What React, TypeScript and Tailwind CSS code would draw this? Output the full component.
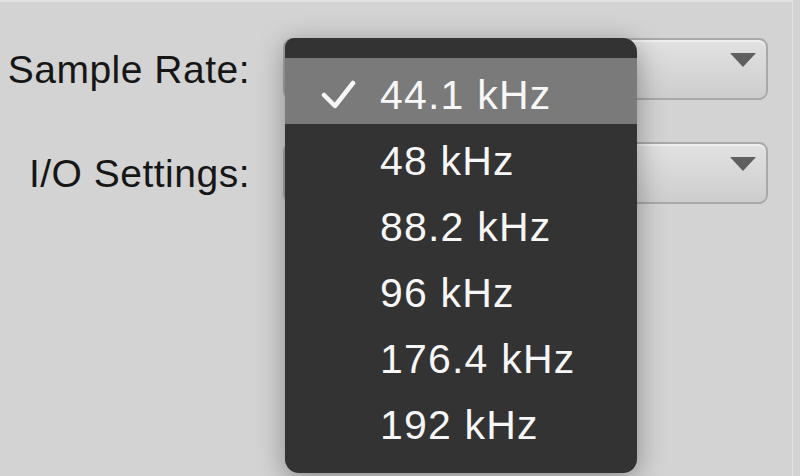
import React from "react";

const rates = ["44.1 kHz", "48 kHz", "88.2 kHz", "96 kHz", "176.4 kHz", "192 kHz"];

function PopupButton() {
  return (
    <div className="h-[62px] w-[485px] rounded-[9px] border-2 border-[#a9a9a9] bg-gradient-to-b from-[#e2e2e2] to-[#cdcdcd] shadow-[inset_0_2px_0_#efefef] flex items-start justify-end pr-[9px] pt-[12px]">
      <svg width="28" height="16" viewBox="0 0 28 16">
        <polygon points="1,1 27,1 14,15" fill="#5f5f5f" />
      </svg>
    </div>
  );
}

export default function App() {
  return (
    <div className="w-[800px] h-[476px] bg-[#d3d3d3] flex overflow-hidden font-['Liberation_Sans',Arial,sans-serif]">
      <div className="relative w-[793px] h-full border-r border-[#e3e3e3] border-t-2 border-t-[#e1e1e1]">
        <div className="pt-[36px] grid grid-cols-[250px_485px] gap-x-[33px] gap-y-[42px] items-center">
          <div className="text-right text-[39px] tracking-[0.5px] text-[#161616] leading-none">Sample Rate:</div>
          <PopupButton />
          <div className="text-right text-[39px] tracking-[0.5px] text-[#161616] leading-none">I/O Settings:</div>
          <PopupButton />
        </div>

        <div className="absolute left-[285px] top-[36px] w-[352px] h-[435px] bg-[#333333] rounded-tl-[9px] rounded-tr-[14px] rounded-b-[14px] shadow-[0_6px_28px_rgba(0,0,0,0.35)] pt-[20px] overflow-hidden">
          {rates.map((r, i) => (
            <div
              key={r}
              className={
                "relative h-[66px] flex items-center pt-[8px] pl-[95px] text-[41px] tracking-[1.2px] text-[#f7f7f7] leading-none " +
                (i === 0 ? "bg-[#7a7a7a]" : "")
              }
            >
              {i === 0 && (
                <svg className="absolute left-[35px] top-[20px]" width="36" height="32" viewBox="0 0 36 32">
                  <polyline points="4,17 15,28 33,5" fill="none" stroke="#f7f7f7" strokeWidth="4.5" strokeLinecap="round" strokeLinejoin="round" />
                </svg>
              )}
              {r}
            </div>
          ))}
        </div>
      </div>
    </div>
  );
}
